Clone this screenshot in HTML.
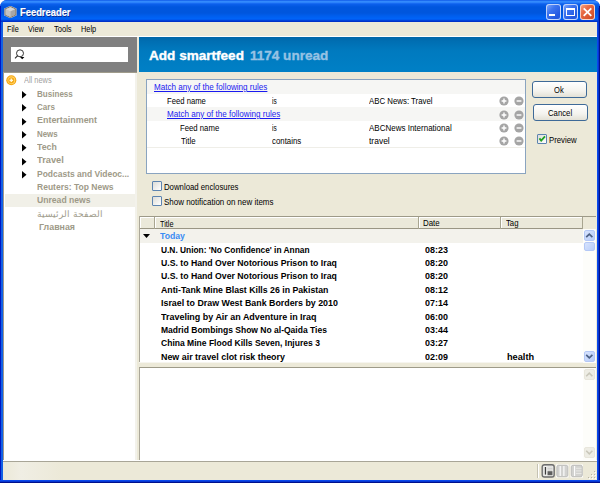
<!DOCTYPE html>
<html><head><meta charset="utf-8">
<style>
*{box-sizing:border-box;margin:0;padding:0}
html,body{width:600px;height:483px;overflow:hidden;background:#fff}
body{position:relative;font-family:"Liberation Sans",sans-serif;font-size:8px;color:#000}
.a{position:absolute}
.t{position:absolute;white-space:nowrap;transform-origin:0 0}
</style></head><body>
<div class="a" style="left:0px;top:0px;width:600px;height:483px;background:#0A3FD8;border-radius:7px 7px 0 0"></div>
<div class="a" style="left:0px;top:0px;width:600px;height:22px;background:linear-gradient(#0C52E4 0px,#2A80FA 1px,#3C94FF 2px,#1C70F6 3px,#0A5EEA 4.5px,#0056DE 7px,#0056DD 13px,#005EEE 16px,#0064F8 19px,#0050E8 20px,#0034CC 21px,#0030C4 22px);border-radius:7px 7px 0 0"></div>
<div class="a" style="left:0px;top:6px;width:1px;height:477px;background:#0016C4"></div>
<div class="a" style="left:1px;top:22px;width:2px;height:461px;background:#1260E4"></div>
<div class="a" style="left:597px;top:22px;width:1px;height:461px;background:#0A48EC"></div>
<div class="a" style="left:598px;top:22px;width:1px;height:461px;background:#0636D0"></div>
<div class="a" style="left:599px;top:6px;width:1px;height:477px;background:#00108C"></div>
<div class="a" style="left:598px;top:8px;width:1px;height:14px;background:#0636D0"></div>
<div class="a" style="left:0px;top:480px;width:600px;height:1px;background:#0A48EC"></div>
<div class="a" style="left:0px;top:481px;width:600px;height:1px;background:#0636D0"></div>
<div class="a" style="left:0px;top:482px;width:600px;height:1px;background:#00108C"></div>
<svg class="a" style="left:4px;top:6px" width="13" height="12" viewBox="0 0 13 12">
  <polygon points="6.4,0.3 12.1,2.8 12.1,9.2 6.4,11.7 0.7,9.2 0.7,2.8" fill="#B8B8B8" stroke="#E6F0FF" stroke-width="1.3" stroke-opacity="0.6"/>
  <polygon points="6.4,0.6 11.8,3 11.8,9 6.4,11.4 1,9 1,3" fill="#BEBEBE" stroke="#7E6C50" stroke-width="0.9"/>
  <polygon points="6.4,1.2 11.2,3.3 6.4,5.6 1.6,3.3" fill="#D6D6D6"/>
  <polygon points="6.4,5.6 11.2,3.3 11.2,8.8 6.4,11" fill="#A6A6A6"/>
  <polygon points="6.4,5.6 1.6,3.3 1.6,8.8 6.4,11" fill="#C2C2C2"/>
</svg>
<div class="t" style="left:20.00px;top:6.20px;font:700 10.3px 'Liberation Sans';line-height:13px;color:#fff;transform:scaleX(0.9098);text-shadow:1px 1px 0 #0A2A90;-webkit-text-stroke:0.2px #fff">Feedreader</div>
<div class="a" style="left:546px;top:4px;width:15px;height:16px;border:1px solid rgba(235,242,255,0.78);border-radius:3px;background:linear-gradient(135deg,#7BA4FA 0%,#3C74F0 35%,#2358E0 80%,#2A5EE0 100%)"></div>
<div class="a" style="left:549px;top:14px;width:6px;height:2px;background:#fff"></div>
<div class="a" style="left:563px;top:4px;width:15px;height:16px;border:1px solid rgba(235,242,255,0.78);border-radius:3px;background:linear-gradient(135deg,#7BA4FA 0%,#3C74F0 35%,#2358E0 80%,#2A5EE0 100%)"></div>
<div class="a" style="left:566px;top:8px;width:9px;height:8px;border:1px solid #fff;border-top-width:2px"></div>
<div class="a" style="left:580px;top:4px;width:15px;height:16px;border:1px solid rgba(255,235,225,0.8);border-radius:3px;background:linear-gradient(135deg,#F4A080 0%,#E86A44 35%,#D5532C 80%,#C84A28 100%)"></div>
<svg class="a" style="left:580px;top:4px" width="15" height="16"><path d="M3.7 4.3L11.3 11.9M11.3 4.3L3.7 11.9" stroke="#fff" stroke-width="1.8"/></svg>
<div class="a" style="left:3px;top:22px;width:594px;height:15px;background:#ECE9D8"></div>
<div class="a" style="left:3px;top:36px;width:594px;height:1px;background:#FFFFFF"></div>
<div class="t" style="left:7.00px;top:23.00px;font:400 9.07px 'Liberation Sans';line-height:12px;color:#000;transform:scaleX(0.8034);">File</div>
<div class="t" style="left:27.90px;top:23.00px;font:400 9.07px 'Liberation Sans';line-height:12px;color:#000;transform:scaleX(0.8077);">View</div>
<div class="t" style="left:53.60px;top:23.00px;font:400 9.07px 'Liberation Sans';line-height:12px;color:#000;transform:scaleX(0.8324);">Tools</div>
<div class="t" style="left:80.70px;top:23.00px;font:400 9.07px 'Liberation Sans';line-height:12px;color:#000;transform:scaleX(0.8119);">Help</div>
<div class="a" style="left:3px;top:37px;width:594px;height:443px;background:#ECE9D8"></div>
<div class="a" style="left:3px;top:37px;width:134px;height:35px;background:#808080"></div>
<div class="a" style="left:11px;top:47px;width:117px;height:15px;background:#fff"></div>
<svg class="a" style="left:14px;top:49px" width="12" height="11" viewBox="0 0 12 11">
  <circle cx="6" cy="4.3" r="3.5" fill="none" stroke="#2A2A2A" stroke-width="0.95"/>
  <path d="M3.7 6.7L1 9.4" stroke="#2A2A2A" stroke-width="1.1"/>
  <path d="M6 7.9h4.4l-2.2 2.3z" fill="#000"/>
</svg>
<div class="a" style="left:3px;top:72px;width:134px;height:1px;background:#A09C8C"></div>
<div class="a" style="left:3px;top:73px;width:1px;height:387px;background:#A09888"></div>
<div class="a" style="left:4px;top:73px;width:131px;height:387px;background:#fff"></div>
<div class="a" style="left:135px;top:73px;width:2px;height:387px;background:#F3F2EB"></div>
<svg class="a" style="left:6px;top:75px" width="11" height="11"><circle cx="5.3" cy="5.3" r="5" fill="#F4A410"/><circle cx="5.3" cy="5.3" r="3.4" fill="none" stroke="#FFD060" stroke-width="1.1"/><circle cx="5.3" cy="5.3" r="2.4" fill="#F8B020"/><path d="M3.6 5.3h3.4M5.3 3.6v3.4" stroke="#FFF6DC" stroke-width="1.3"/></svg>
<div class="t" style="left:24.00px;top:74.00px;font:400 9.18px 'Liberation Sans';line-height:12px;color:#A0A0A0;transform:scaleX(0.8100);">All news</div>
<div class="a" style="left:5px;top:194px;width:130px;height:13px;background:#F1F0E8"></div>
<svg class="a" style="left:22px;top:90.80px" width="5" height="8"><path d="M0 0L4.5 3.8L0 7.6z" fill="#000"/></svg>
<div class="t" style="left:36.90px;top:88.50px;font:700 8.3px 'Liberation Sans';line-height:11px;color:#9E9A88;transform:scaleX(0.9711);">Business</div>
<svg class="a" style="left:22px;top:104.17px" width="5" height="8"><path d="M0 0L4.5 3.8L0 7.6z" fill="#000"/></svg>
<div class="t" style="left:36.90px;top:101.85px;font:700 8.3px 'Liberation Sans';line-height:11px;color:#9E9A88;transform:scaleX(0.9716);">Cars</div>
<svg class="a" style="left:22px;top:117.54px" width="5" height="8"><path d="M0 0L4.5 3.8L0 7.6z" fill="#000"/></svg>
<div class="t" style="left:36.90px;top:115.20px;font:700 8.3px 'Liberation Sans';line-height:11px;color:#9E9A88;transform:scaleX(1.0764);">Entertainment</div>
<svg class="a" style="left:22px;top:130.91px" width="5" height="8"><path d="M0 0L4.5 3.8L0 7.6z" fill="#000"/></svg>
<div class="t" style="left:36.90px;top:128.55px;font:700 8.3px 'Liberation Sans';line-height:11px;color:#9E9A88;transform:scaleX(0.9520);">News</div>
<svg class="a" style="left:22px;top:144.28px" width="5" height="8"><path d="M0 0L4.5 3.8L0 7.6z" fill="#000"/></svg>
<div class="t" style="left:36.90px;top:141.90px;font:700 8.3px 'Liberation Sans';line-height:11px;color:#9E9A88;transform:scaleX(1.0546);">Tech</div>
<svg class="a" style="left:22px;top:157.65px" width="5" height="8"><path d="M0 0L4.5 3.8L0 7.6z" fill="#000"/></svg>
<div class="t" style="left:36.90px;top:155.25px;font:700 8.3px 'Liberation Sans';line-height:11px;color:#9E9A88;transform:scaleX(1.1190);">Travel</div>
<svg class="a" style="left:22px;top:171.02px" width="5" height="8"><path d="M0 0L4.5 3.8L0 7.6z" fill="#000"/></svg>
<div class="t" style="left:36.90px;top:168.60px;font:700 8.3px 'Liberation Sans';line-height:11px;color:#9E9A88;transform:scaleX(1.0210);">Podcasts and Videoc...</div>
<div class="t" style="left:36.90px;top:181.95px;font:700 8.3px 'Liberation Sans';line-height:11px;color:#9E9A88;transform:scaleX(1.0265);">Reuters: Top News</div>
<div class="t" style="left:36.90px;top:195.30px;font:700 8.3px 'Liberation Sans';line-height:11px;color:#9E9A88;transform:scaleX(1.0379);">Unread news</div>
<div class="t" style="left:37.30px;top:207.50px;font:400 9.18px 'Liberation Sans';line-height:12px;color:#A09C8C;transform:scaleX(1.0132);">الصفحة الرئيسية</div>
<div class="t" style="left:38.50px;top:221.80px;font:700 8.3px 'Liberation Sans';line-height:11px;color:#9E9A88;transform:scaleX(1.0678);">Главная</div>
<div class="a" style="left:139px;top:37px;width:458px;height:35px;background:linear-gradient(#0066A8 0px,#006EB2 4px,#007ABF 14px,#0080C6 35px)"></div>
<div class="t" style="left:149.00px;top:47.00px;font:700 13px 'Liberation Sans';line-height:17px;color:#fff;transform:scaleX(1.0431);-webkit-text-stroke:0.35px #fff">Add smartfeed</div>
<div class="t" style="left:250.00px;top:47.00px;font:700 13px 'Liberation Sans';line-height:17px;color:#96C2E4;transform:scaleX(1.0410);-webkit-text-stroke:0.35px #96C2E4">1174 unread</div>
<div class="a" style="left:146px;top:79px;width:380px;height:95px;background:#fff;border:1px solid #8AA4C0"></div>
<div class="a" style="left:147px;top:80px;width:378px;height:14px;background:#F6F6F4"></div>
<div class="a" style="left:147px;top:94px;width:378px;height:1px;background:#EFEEE8"></div>
<div class="a" style="left:147px;top:94px;width:378px;height:13px;background:#FFFFFF"></div>
<div class="a" style="left:147px;top:107px;width:378px;height:1px;background:#EFEEE8"></div>
<div class="a" style="left:147px;top:107px;width:378px;height:14px;background:#F6F6F4"></div>
<div class="a" style="left:147px;top:121px;width:378px;height:1px;background:#EFEEE8"></div>
<div class="a" style="left:147px;top:121px;width:378px;height:13px;background:#FFFFFF"></div>
<div class="a" style="left:147px;top:134px;width:378px;height:1px;background:#EFEEE8"></div>
<div class="a" style="left:147px;top:134px;width:378px;height:13px;background:#FFFFFF"></div>
<div class="a" style="left:147px;top:147px;width:378px;height:1px;background:#EFEEE8"></div>
<div class="t" style="left:153.75px;top:81.20px;font:400 9.18px 'Liberation Sans';line-height:12px;color:#1A1AF0;transform:scaleX(0.8826);text-decoration:underline;text-underline-offset:1px">Match any of the following rules</div>
<div class="t" style="left:167.00px;top:95.00px;font:400 9.18px 'Liberation Sans';line-height:12px;color:#000;transform:scaleX(0.8370);">Feed name</div>
<div class="t" style="left:272.40px;top:95.00px;font:400 9.18px 'Liberation Sans';line-height:12px;color:#000;transform:scaleX(0.7105);">is</div>
<div class="t" style="left:369.30px;top:95.00px;font:400 9.18px 'Liberation Sans';line-height:12px;color:#000;transform:scaleX(0.8546);">ABC News: Travel</div>
<div class="t" style="left:167.20px;top:107.80px;font:400 9.18px 'Liberation Sans';line-height:12px;color:#1A1AF0;transform:scaleX(0.8814);text-decoration:underline;text-underline-offset:1px">Match any of the following rules</div>
<div class="t" style="left:180.40px;top:121.70px;font:400 9.18px 'Liberation Sans';line-height:12px;color:#000;transform:scaleX(0.8446);">Feed name</div>
<div class="t" style="left:272.40px;top:121.70px;font:400 9.18px 'Liberation Sans';line-height:12px;color:#000;transform:scaleX(0.7105);">is</div>
<div class="t" style="left:369.30px;top:121.70px;font:400 9.18px 'Liberation Sans';line-height:12px;color:#000;transform:scaleX(0.8725);">ABCNews International</div>
<div class="t" style="left:181.00px;top:135.00px;font:400 9.18px 'Liberation Sans';line-height:12px;color:#000;transform:scaleX(0.8587);">Title</div>
<div class="t" style="left:272.40px;top:135.00px;font:400 9.18px 'Liberation Sans';line-height:12px;color:#000;transform:scaleX(0.8561);">contains</div>
<div class="t" style="left:369.00px;top:135.00px;font:400 9.18px 'Liberation Sans';line-height:12px;color:#000;transform:scaleX(0.9245);">travel</div>
<svg class="a" style="left:498.5px;top:96px" width="26" height="10" viewBox="0 0 26 10"><circle cx="5" cy="5" r="4.6" fill="#A5A5A5"/><path d="M2.6 5h4.8M5 2.6v4.8" stroke="#fff" stroke-width="1.4"/><circle cx="20" cy="5" r="4.6" fill="#A5A5A5"/><path d="M17.6 5h4.8" stroke="#fff" stroke-width="1.4"/></svg>
<svg class="a" style="left:498.5px;top:110px" width="26" height="10" viewBox="0 0 26 10"><circle cx="5" cy="5" r="4.6" fill="#A5A5A5"/><path d="M2.6 5h4.8M5 2.6v4.8" stroke="#fff" stroke-width="1.4"/><circle cx="20" cy="5" r="4.6" fill="#A5A5A5"/><path d="M17.6 5h4.8" stroke="#fff" stroke-width="1.4"/></svg>
<svg class="a" style="left:498.5px;top:123px" width="26" height="10" viewBox="0 0 26 10"><circle cx="5" cy="5" r="4.6" fill="#A5A5A5"/><path d="M2.6 5h4.8M5 2.6v4.8" stroke="#fff" stroke-width="1.4"/><circle cx="20" cy="5" r="4.6" fill="#A5A5A5"/><path d="M17.6 5h4.8" stroke="#fff" stroke-width="1.4"/></svg>
<svg class="a" style="left:498.5px;top:136px" width="26" height="10" viewBox="0 0 26 10"><circle cx="5" cy="5" r="4.6" fill="#A5A5A5"/><path d="M2.6 5h4.8M5 2.6v4.8" stroke="#fff" stroke-width="1.4"/><circle cx="20" cy="5" r="4.6" fill="#A5A5A5"/><path d="M17.6 5h4.8" stroke="#fff" stroke-width="1.4"/></svg>
<div class="a" style="left:532px;top:81px;width:55px;height:17px;border:1px solid #3E6A98;border-radius:3px;background:linear-gradient(#FFFFFF,#F4F3EE 60%,#E3E1D6)"></div>
<div class="t" style="left:554.00px;top:83.90px;font:400 9.18px 'Liberation Sans';line-height:12px;color:#000;transform:scaleX(0.8241);">Ok</div>
<div class="a" style="left:533px;top:104px;width:55px;height:17px;border:1px solid #3E6A98;border-radius:3px;background:linear-gradient(#FFFFFF,#F4F3EE 60%,#E3E1D6)"></div>
<div class="t" style="left:547.50px;top:106.70px;font:400 9.18px 'Liberation Sans';line-height:12px;color:#000;transform:scaleX(0.8452);">Cancel</div>
<div class="a" style="left:537px;top:134px;width:10px;height:10px;background:linear-gradient(135deg,#DCDCD7,#FFFFFF);border:1px solid #5C84B0;border-radius:1px"></div>
<svg class="a" style="left:538px;top:135px" width="8" height="8" viewBox="0 0 8 8"><path d="M1.4 3.4L3.2 5.6L7 1.4" fill="none" stroke="#21A121" stroke-width="1.8"/></svg>
<div class="t" style="left:549.00px;top:133.90px;font:400 9.18px 'Liberation Sans';line-height:12px;color:#000;transform:scaleX(0.8486);">Preview</div>
<div class="a" style="left:152px;top:181px;width:10px;height:10px;background:linear-gradient(135deg,#DCDCD7,#FFFFFF);border:1px solid #5C84B0;border-radius:1px"></div>
<div class="t" style="left:164.00px;top:181.20px;font:400 9.18px 'Liberation Sans';line-height:12px;color:#000;transform:scaleX(0.8490);">Download enclosures</div>
<div class="a" style="left:152px;top:196px;width:10px;height:10px;background:linear-gradient(135deg,#DCDCD7,#FFFFFF);border:1px solid #5C84B0;border-radius:1px"></div>
<div class="t" style="left:164.00px;top:196.20px;font:400 9.18px 'Liberation Sans';line-height:12px;color:#000;transform:scaleX(0.8691);">Show notification on new items</div>
<div class="a" style="left:137px;top:73px;width:2px;height:387px;background:#ECE9D8"></div>
<div class="a" style="left:139px;top:216px;width:457px;height:146px;background:#fff"></div>
<div class="a" style="left:139px;top:216px;width:457px;height:1px;background:#9D9A88"></div>
<div class="a" style="left:139px;top:216px;width:1px;height:146px;background:#ACA899"></div>
<div class="a" style="left:139px;top:362px;width:457px;height:1px;background:#F6F5EF"></div>
<div class="a" style="left:140px;top:217px;width:443px;height:11px;background:#EBE9DA"></div>
<div class="a" style="left:140px;top:217px;width:443px;height:1px;background:#FFFFFF"></div>
<div class="a" style="left:140px;top:228px;width:443px;height:1px;background:#9A9684"></div>
<div class="a" style="left:140px;top:217px;width:1px;height:11px;background:#FFFFFF"></div>
<div class="a" style="left:583px;top:217px;width:13px;height:12px;background:#ECE9D8"></div>
<div class="a" style="left:154px;top:217px;width:1px;height:12px;background:#A8A590"></div>
<div class="a" style="left:155px;top:217px;width:1px;height:11px;background:#FFFFFF"></div>
<div class="a" style="left:418px;top:217px;width:1px;height:12px;background:#A8A590"></div>
<div class="a" style="left:419px;top:217px;width:1px;height:11px;background:#FFFFFF"></div>
<div class="a" style="left:500px;top:217px;width:1px;height:12px;background:#A8A590"></div>
<div class="a" style="left:501px;top:217px;width:1px;height:11px;background:#FFFFFF"></div>
<div class="a" style="left:582px;top:217px;width:1px;height:12px;background:#A8A590"></div>
<div class="t" style="left:160.00px;top:217.50px;font:400 9.18px 'Liberation Sans';line-height:12px;color:#000;transform:scaleX(0.7995);">Title</div>
<div class="t" style="left:423.40px;top:217.40px;font:400 9.18px 'Liberation Sans';line-height:12px;color:#000;transform:scaleX(0.8613);">Date</div>
<div class="t" style="left:506.00px;top:217.40px;font:400 9.18px 'Liberation Sans';line-height:12px;color:#000;transform:scaleX(0.8443);">Tag</div>
<div class="a" style="left:140px;top:229px;width:443px;height:14px;background:#F3F2EC"></div>
<svg class="a" style="left:143px;top:234px" width="8" height="5"><path d="M0 0h7L3.5 4z" fill="#000"/></svg>
<div class="t" style="left:160.00px;top:231.00px;font:700 8.8px 'Liberation Sans';line-height:11px;color:#3A8CF4;transform:scaleX(0.9858);">Today</div>
<div class="t" style="left:160.70px;top:244.60px;font:700 8.8px 'Liberation Sans';line-height:11px;color:#000;transform:scaleX(0.9502);">U.N. Union: 'No Confidence' in Annan</div>
<div class="t" style="left:425.00px;top:244.60px;font:700 8.8px 'Liberation Sans';line-height:11px;color:#000;transform:scaleX(1.0174);">08:23</div>
<div class="t" style="left:160.70px;top:258.00px;font:700 8.8px 'Liberation Sans';line-height:11px;color:#000;transform:scaleX(0.9880);">U.S. to Hand Over Notorious Prison to Iraq</div>
<div class="t" style="left:425.00px;top:258.00px;font:700 8.8px 'Liberation Sans';line-height:11px;color:#000;transform:scaleX(1.0174);">08:20</div>
<div class="t" style="left:160.70px;top:271.40px;font:700 8.8px 'Liberation Sans';line-height:11px;color:#000;transform:scaleX(0.9880);">U.S. to Hand Over Notorious Prison to Iraq</div>
<div class="t" style="left:425.00px;top:271.40px;font:700 8.8px 'Liberation Sans';line-height:11px;color:#000;transform:scaleX(1.0174);">08:20</div>
<div class="t" style="left:160.70px;top:284.80px;font:700 8.8px 'Liberation Sans';line-height:11px;color:#000;transform:scaleX(0.9934);">Anti-Tank Mine Blast Kills 26 in Pakistan</div>
<div class="t" style="left:425.00px;top:284.80px;font:700 8.8px 'Liberation Sans';line-height:11px;color:#000;transform:scaleX(1.0174);">08:12</div>
<div class="t" style="left:160.70px;top:298.20px;font:700 8.8px 'Liberation Sans';line-height:11px;color:#000;transform:scaleX(1.0059);">Israel to Draw West Bank Borders by 2010</div>
<div class="t" style="left:425.00px;top:298.20px;font:700 8.8px 'Liberation Sans';line-height:11px;color:#000;transform:scaleX(1.0174);">07:14</div>
<div class="t" style="left:160.70px;top:311.60px;font:700 8.8px 'Liberation Sans';line-height:11px;color:#000;transform:scaleX(1.0175);">Traveling by Air an Adventure in Iraq</div>
<div class="t" style="left:425.00px;top:311.60px;font:700 8.8px 'Liberation Sans';line-height:11px;color:#000;transform:scaleX(1.0174);">06:00</div>
<div class="t" style="left:160.70px;top:325.00px;font:700 8.8px 'Liberation Sans';line-height:11px;color:#000;transform:scaleX(0.9679);">Madrid Bombings Show No al-Qaida Ties</div>
<div class="t" style="left:425.00px;top:325.00px;font:700 8.8px 'Liberation Sans';line-height:11px;color:#000;transform:scaleX(1.0174);">03:44</div>
<div class="t" style="left:160.70px;top:338.40px;font:700 8.8px 'Liberation Sans';line-height:11px;color:#000;transform:scaleX(0.9703);">China Mine Flood Kills Seven, Injures 3</div>
<div class="t" style="left:425.00px;top:338.40px;font:700 8.8px 'Liberation Sans';line-height:11px;color:#000;transform:scaleX(1.0174);">03:27</div>
<div class="t" style="left:160.70px;top:351.80px;font:700 8.8px 'Liberation Sans';line-height:11px;color:#000;transform:scaleX(1.0096);">New air travel clot risk theory</div>
<div class="t" style="left:425.00px;top:351.80px;font:700 8.8px 'Liberation Sans';line-height:11px;color:#000;transform:scaleX(1.0174);">02:09</div>
<div class="t" style="left:506.70px;top:351.80px;font:700 8.8px 'Liberation Sans';line-height:11px;color:#000;transform:scaleX(1.0458);">health</div>
<div class="a" style="left:583px;top:229px;width:13px;height:134px;background:#FDFDFA"></div>
<div class="a" style="left:584px;top:230px;width:11px;height:11px;border-radius:2px;background:linear-gradient(135deg,#D7E3FD,#B8CDF9);border:1px solid #B4C8F6"></div>
<svg class="a" style="left:584px;top:230px" width="11" height="11"><path d="M2.2 7.2L5.3 4.2L8.4 7.2" fill="none" stroke="#4D6185" stroke-width="1.7"/></svg>
<div class="a" style="left:584px;top:242px;width:11px;height:9px;border-radius:2px;background:linear-gradient(135deg,#D7E3FD,#B8CDF9);border:1px solid #B4C8F6"></div>
<div class="a" style="left:584px;top:351px;width:11px;height:11px;border-radius:2px;background:linear-gradient(135deg,#D7E3FD,#B8CDF9);border:1px solid #B4C8F6"></div>
<svg class="a" style="left:584px;top:351px" width="11" height="11"><path d="M2.2 3.8L5.3 6.8L8.4 3.8" fill="none" stroke="#4D6185" stroke-width="1.7"/></svg>
<div class="a" style="left:139px;top:367px;width:457px;height:93px;background:#fff;border-top:1px solid #9D9A88;border-left:1px solid #ACA899"></div>
<div class="a" style="left:583px;top:368px;width:13px;height:92px;background:#FDFDFA"></div>
<div class="a" style="left:584px;top:369px;width:11px;height:11px;border-radius:2px;background:#EEEDE5;border:1px solid #E8E6DC"></div>
<svg class="a" style="left:584px;top:369px" width="11" height="11"><path d="M2.2 7.2L5.3 4.2L8.4 7.2" fill="none" stroke="#C9C7BA" stroke-width="1.6"/></svg>
<div class="a" style="left:584px;top:447px;width:11px;height:11px;border-radius:2px;background:#EEEDE5;border:1px solid #E8E6DC"></div>
<svg class="a" style="left:584px;top:447px" width="11" height="11"><path d="M2.2 3.8L5.3 6.8L8.4 3.8" fill="none" stroke="#C9C7BA" stroke-width="1.6"/></svg>
<div class="a" style="left:3px;top:460px;width:594px;height:1px;background:#FFFFFF"></div>
<div class="a" style="left:3px;top:461px;width:594px;height:1px;background:#A8A597"></div>
<div class="a" style="left:3px;top:462px;width:594px;height:18px;background:linear-gradient(90deg,#ECE9D8,#F0EEE4 3%,#ECE9D8 10%)"></div>
<div class="a" style="left:537px;top:464px;width:1px;height:14px;background:#C5C2B2"></div>
<div class="a" style="left:538px;top:464px;width:1px;height:14px;background:#FFFFFF"></div>
<svg class="a" style="left:541px;top:464px" width="43" height="14" viewBox="0 0 43 14">
 <rect x="1.2" y="0.7" width="12" height="12.3" rx="2.2" fill="#D9D9D6" stroke="#6E6E6E" stroke-width="1.4"/>
 <rect x="2.5" y="2" width="9.5" height="9.7" fill="#F2F2F0"/>
 <rect x="3.8" y="3" width="1.3" height="7.6" fill="#3A3A3A"/>
 <rect x="6.5" y="2.6" width="5" height="4" fill="#C9C9C6"/>
 <path d="M6.5 3.6h5M6.5 5.3h5" stroke="#F5F5F5" stroke-width="0.6"/>
 <rect x="6.5" y="7.2" width="5" height="4" fill="#5E5E5E"/>
 <rect x="15" y="0.5" width="12.5" height="13" fill="#FFFFFF"/>
 <rect x="15.8" y="1.3" width="11" height="11.4" rx="1.6" fill="#D2D2D0" stroke="#B5B5B2" stroke-width="0.8"/>
 <path d="M19.2 2v10M22.9 2v10" stroke="#FFFFFF" stroke-width="1.1"/>
 <rect x="29.5" y="0.5" width="12.5" height="13" fill="#FFFFFF"/>
 <rect x="30.3" y="1.3" width="11" height="11.4" rx="1.6" fill="#D2D2D0" stroke="#B5B5B2" stroke-width="0.8"/>
 <path d="M33.6 2v10" stroke="#FFFFFF" stroke-width="1.1"/>
 <path d="M35 4.3h5.5M35 6.9h5.5M35 9.5h5.5" stroke="#ECECEA" stroke-width="0.8"/>
</svg>
<div class="a" style="left:594px;top:471px;width:1px;height:1px;background:#B8B5A5"></div>
<div class="a" style="left:595px;top:472px;width:1px;height:1px;background:#FFFFFF"></div>
<div class="a" style="left:594px;top:474px;width:1px;height:1px;background:#B8B5A5"></div>
<div class="a" style="left:595px;top:475px;width:1px;height:1px;background:#FFFFFF"></div>
<div class="a" style="left:591px;top:474px;width:1px;height:1px;background:#B8B5A5"></div>
<div class="a" style="left:592px;top:475px;width:1px;height:1px;background:#FFFFFF"></div>
<div class="a" style="left:594px;top:477px;width:1px;height:1px;background:#B8B5A5"></div>
<div class="a" style="left:595px;top:478px;width:1px;height:1px;background:#FFFFFF"></div>
<div class="a" style="left:591px;top:477px;width:1px;height:1px;background:#B8B5A5"></div>
<div class="a" style="left:592px;top:478px;width:1px;height:1px;background:#FFFFFF"></div>
<div class="a" style="left:588px;top:477px;width:1px;height:1px;background:#B8B5A5"></div>
<div class="a" style="left:589px;top:478px;width:1px;height:1px;background:#FFFFFF"></div>
</body></html>
